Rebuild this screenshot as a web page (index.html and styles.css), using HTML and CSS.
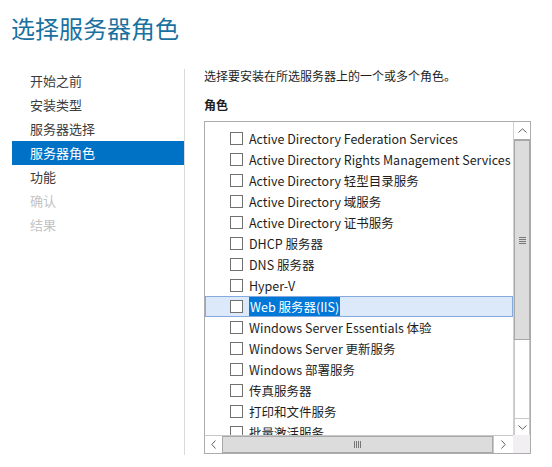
FILE: index.html
```html
<!DOCTYPE html>
<html lang="zh-CN">
<head>
  <meta charset="UTF-8">
  <title>选择服务器角色</title>
  <link rel="stylesheet" href="styles.css">
</head>
<body>
  <h1 class="title">选择服务器角色</h1>
  <div class="wizard">
    <!-- 左侧步骤 -->
    <ul class="steps">
      <li>开始之前</li>
      <li>安装类型</li>
      <li>服务器选择</li>
      <li class="active">服务器角色</li>
      <li>功能</li>
      <li class="disabled">确认</li>
      <li class="disabled">结果</li>
    </ul>

    <!-- 右侧内容 -->
    <div class="content">
      <p class="intro">选择要安装在所选服务器上的一个或多个角色。</p>
      <h2 class="label">角色</h2>
      <div class="listbox">
        <div class="rows">
          <div class="row"><span class="check"></span>Active Directory Federation Services</div>
          <div class="row"><span class="check"></span>Active Directory Rights Management Services</div>
          <div class="row"><span class="check"></span>Active Directory 轻型目录服务</div>
          <div class="row"><span class="check"></span>Active Directory 域服务</div>
          <div class="row"><span class="check"></span>Active Directory 证书服务</div>
          <div class="row"><span class="check"></span>DHCP 服务器</div>
          <div class="row"><span class="check"></span>DNS 服务器</div>
          <div class="row"><span class="check"></span>Hyper-V</div>
          <div class="row selected"><span class="check"></span><span class="mark">Web 服务器(IIS)</span></div>
          <div class="row"><span class="check"></span>Windows Server Essentials 体验</div>
          <div class="row"><span class="check"></span>Windows Server 更新服务</div>
          <div class="row"><span class="check"></span>Windows 部署服务</div>
          <div class="row"><span class="check"></span>传真服务器</div>
          <div class="row"><span class="check"></span>打印和文件服务</div>
          <div class="row"><span class="check"></span>批量激活服务</div>
        </div>
        <div class="vscroll">
          <div class="btn">
            <svg width="9" height="5" viewBox="0 0 9 5"><path d="M0.5 4.5 L4.5 0.8 L8.5 4.5" fill="none" stroke="#606060" stroke-width="1"/></svg>
          </div>
          <div class="vthumb"><span class="grip-h"></span></div>
          <div class="vtrack"></div>
          <div class="btn btn-down">
            <svg width="9" height="5" viewBox="0 0 9 5"><path d="M0.5 0.5 L4.5 4.2 L8.5 0.5" fill="none" stroke="#606060" stroke-width="1"/></svg>
          </div>
        </div>
        <div class="hscroll">
          <div class="btn">
            <svg width="5" height="9" viewBox="0 0 5 9"><path d="M4.5 0.5 L0.8 4.5 L4.5 8.5" fill="none" stroke="#606060" stroke-width="1"/></svg>
          </div>
          <div class="hthumb"><span class="grip-v"></span></div>
          <div class="btn btn-right">
            <svg width="5" height="9" viewBox="0 0 5 9"><path d="M0.5 0.5 L4.2 4.5 L0.5 8.5" fill="none" stroke="#606060" stroke-width="1"/></svg>
          </div>
        </div>
        <div class="corner"></div>
      </div>
    </div>
  </div>
</body>
</html>
```

FILE: styles.css
```css
/* Generelle stiler */
* { box-sizing: border-box; }
body {
  margin: 0;
  font-family: "Noto Sans CJK SC", "Noto Sans", sans-serif;
  font-size: 12px;
  color: #1e1e1e;
  background-color: #fff;
}
.title {
  margin: 0;
  padding: 10px 0 0 11px;
  height: 69px;
  font-size: 24px;
  font-weight: 400;
  line-height: 36px;
  color: #1a71a0;
}
.wizard {
  display: flex;
  height: 386px;
}
/* Steg i venstre kolonne */
.steps {
  list-style: none;
  margin: 0;
  padding: 0 0 0 12px;
  width: 185px;
  border-right: 1px solid #dadada;
}
.steps li {
  height: 24px;
  line-height: 24px;
  padding-left: 18px;
  font-size: 13px;
  color: #3c3c3c;
}
.steps li.active {
  background-color: #0072c6;
  color: #fff;
}
.steps li.disabled { color: #c4c4c4; }
/* Innhold */
.content {
  padding-left: 19px;
}
.intro {
  margin: 0;
  line-height: 13px;
  color: #1e1e1e;
}
.label {
  margin: 15px 0 0;
  font-size: 12px;
  font-weight: 700;
  line-height: 16px;
}
.listbox {
  margin-top: 8px;
  width: 327px;
  height: 333px;
  border: 1px solid #acacac;
  display: grid;
  grid-template-columns: 308px 17px;
  grid-template-rows: 313px 18px;
}
.rows {
  overflow: hidden;
  padding-top: 6px;
}
.row {
  display: flex;
  align-items: center;
  height: 21px;
  padding-left: 24px;
  font-size: 12.5px;
  white-space: nowrap;
  border: 1px solid transparent;
}
.row.selected {
  background-color: #dce9fa;
  border-color: #84aade;
}
.check {
  width: 13px;
  height: 13px;
  border: 1px solid #707070;
  background-color: #fff;
  margin-right: 6px;
  flex: none;
}
.mark {
  background-color: #0078d7;
  color: #fff;
  padding: 0 1px;
}
/* Rullefelt */
.vscroll {
  display: flex;
  flex-direction: column;
  border-left: 1px solid #d0d0d0;
}
.btn {
  height: 17px;
  display: flex;
  align-items: center;
  justify-content: center;
  background-color: #fff;
  flex: none;
}
.vthumb {
  height: 201px;
  background-color: #dcdcdc;
  border: 1px solid #a8a8a8;
  border-top-width: 2px;
  display: flex;
  justify-content: center;
  align-items: center;
}
.grip-h {
  width: 7px;
  height: 7px;
  background: repeating-linear-gradient(#777 0 1px, transparent 1px 2px);
}
.vtrack {
  flex: 1;
  background-color: #fff;
  border-left: 1px solid #c8c8c8;
  border-right: 1px solid #c8c8c8;
}
.btn-down {
  border-top: 1px solid #c8c8c8;
  border-left: 1px solid #c8c8c8;
  border-right: 1px solid #c8c8c8;
}
.hscroll {
  display: flex;
  border-top: 1px solid #c8c8c8;
}
.hscroll .btn {
  width: 17px;
  height: auto;
}
.hthumb {
  width: 271px;
  background-color: #dcdcdc;
  border: 1px solid #a8a8a8;
  display: flex;
  justify-content: center;
  align-items: center;
}
.grip-v {
  width: 7px;
  height: 7px;
  background: repeating-linear-gradient(90deg, #777 0 1px, transparent 1px 2px);
}
.btn-right {
  flex: 1;
  border-left: 1px solid #c8c8c8;
}
.corner {
  background-color: #f2eff3;
}
```
